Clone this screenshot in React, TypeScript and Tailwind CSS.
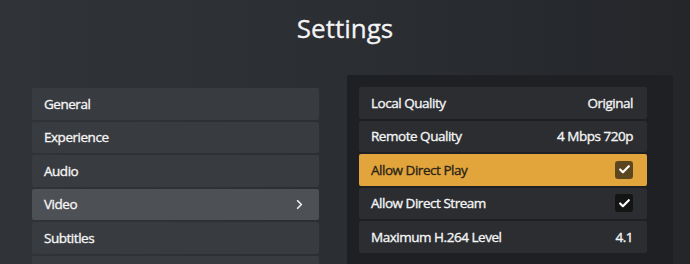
import React from "react";
import { Check, ChevronRight } from "lucide-react";

const sections = ["General", "Experience", "Audio", "Video", "Subtitles", ""];

type Setting = { label: string; value?: string; checked?: boolean; active?: boolean };

const settings: Setting[] = [
  { label: "Local Quality", value: "Original" },
  { label: "Remote Quality", value: "4 Mbps 720p" },
  { label: "Allow Direct Play", checked: true, active: true },
  { label: "Allow Direct Stream", checked: true },
  { label: "Maximum H.264 Level", value: "4.1" },
];

export default function App() {
  return (
    <div
      className="w-[690px] h-[264px] overflow-hidden bg-gradient-to-r from-[#303338] via-[#2b2e32] to-[#24262a] text-[#f4f4f4]"
      style={{ fontFamily: '"Open Sans", "Noto Sans", sans-serif' }}
    >
      {/* Header */}
      <div className="h-[75px] flex justify-center pt-[10px]">
        <h1 className="text-[26px] leading-[36px] font-normal text-[#f4f4f4] [-webkit-text-stroke:0.3px_currentColor]">
          Settings
        </h1>
      </div>

      <div className="flex items-start pl-[32px]">
        {/* Section list */}
        <div className="w-[287px] mt-[13px] flex flex-col gap-[2px]">
          {sections.map((s, i) => (
            <div
              key={i}
              className={`h-[31.5px] shrink-0 flex items-center justify-between pl-[12px] pr-[12px] rounded-[2px] text-[13.5px] font-normal tracking-[-0.035em] [-webkit-text-stroke:0.35px_currentColor] ${
                s === "Video" ? "bg-[#4d5054]" : "bg-[#383b3f]"
              }`}
            >
              <span>{s}</span>
              {s === "Video" && <ChevronRight size={15} strokeWidth={2.75} className="text-[#eeeeee]" />}
            </div>
          ))}
        </div>

        {/* Settings panel */}
        <div className="ml-[28px] w-[326px] h-[200px] bg-[#1e2023] pt-[12px] pl-[12px] pr-[26px] rounded-[2px]">
          <div className="flex flex-col gap-[2px]">
            {settings.map((r) => (
              <div
                key={r.label}
                className={`h-[31.5px] shrink-0 flex items-center justify-between pl-[12px] pr-[14px] rounded-[2px] text-[13.5px] font-normal tracking-[-0.035em] [-webkit-text-stroke:0.35px_currentColor] ${
                  r.active ? "bg-[#e2a53b] text-[#2a2418]" : "bg-[#2b2d31]"
                }`}
              >
                <span>{r.label}</span>
                {r.value && <span>{r.value}</span>}
                {r.checked && (
                  <span
                    className={`w-[18px] h-[18px] rounded-[3px] flex items-center justify-center ${
                      r.active ? "bg-[#5c4620]" : "bg-[#141414]"
                    }`}
                  >
                    <Check size={13} strokeWidth={4} className="text-white" />
                  </span>
                )}
              </div>
            ))}
          </div>
        </div>
      </div>
    </div>
  );
}
